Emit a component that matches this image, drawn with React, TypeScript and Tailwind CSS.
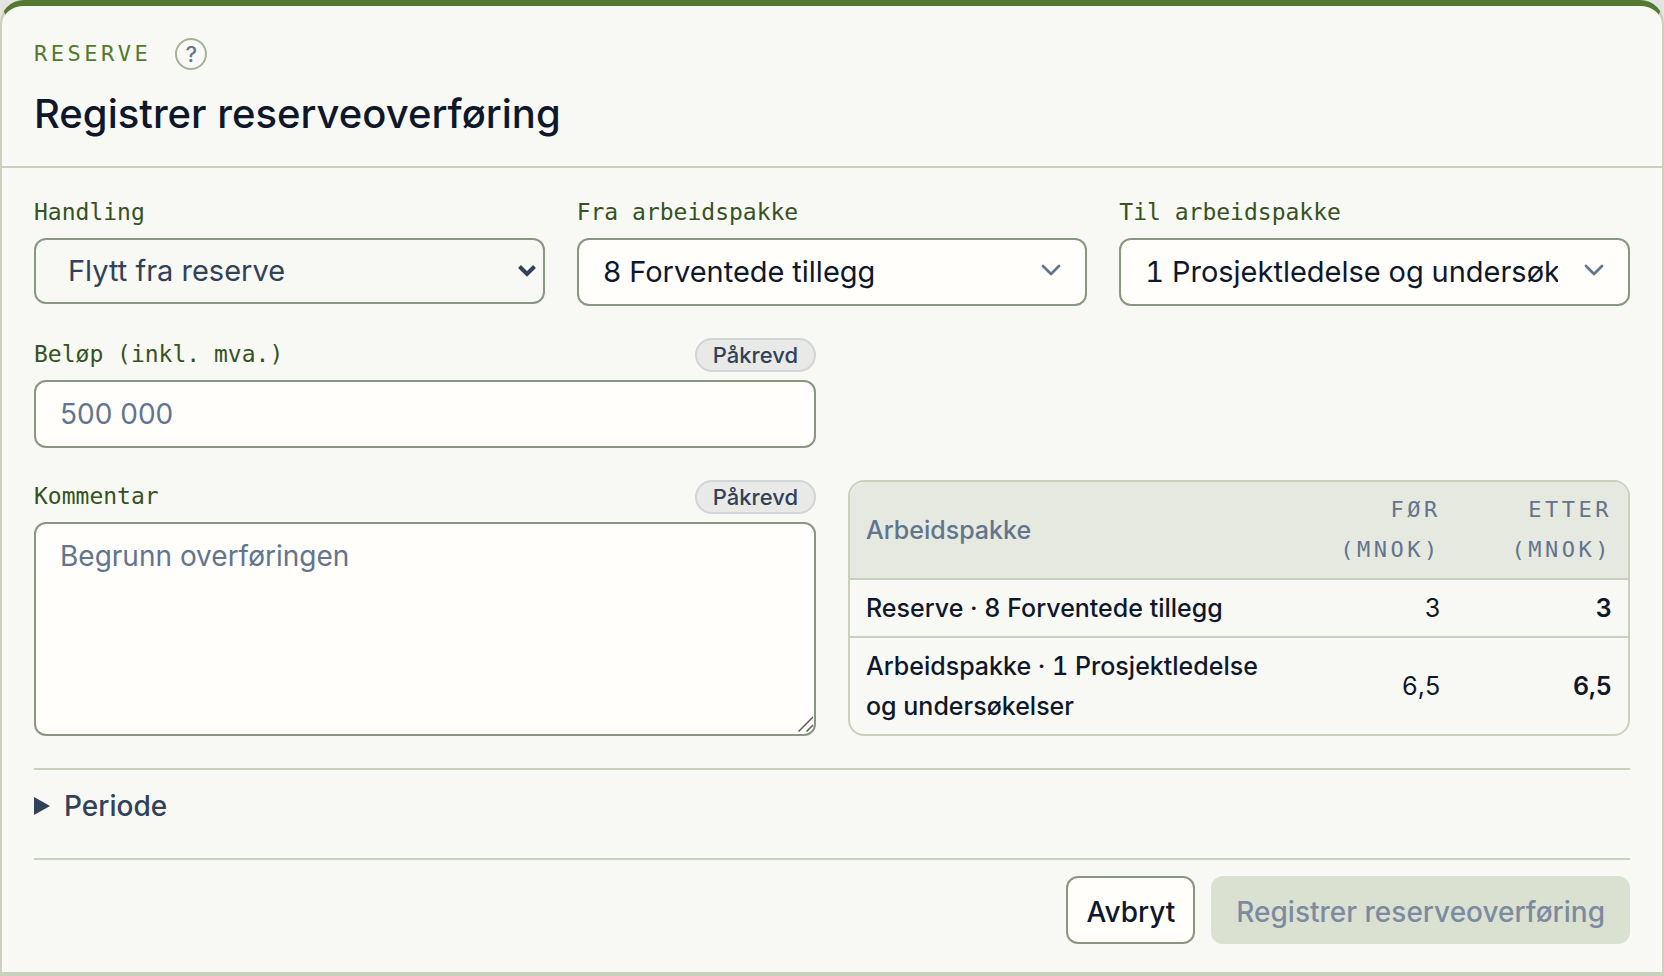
import React from "react";

const fieldBox =
  "w-full rounded-xl border-2 border-[#8a9780] bg-[#fffefb] text-[28px] leading-10 text-slate-900 placeholder:text-slate-500 placeholder:opacity-100";

function FieldLabel({ htmlFor, children }: { htmlFor: string; children: React.ReactNode }) {
  return (
    <label
      htmlFor={htmlFor}
      className="pb-1.5 font-['DejaVu_Sans_Mono',monospace] text-[23px] leading-6 text-[#36521f]"
    >
      {children}
    </label>
  );
}

function RequiredBadge() {
  return (
    <span className="flex h-[34px] items-center rounded-full border-2 border-[#d1d5d8] bg-[#e9eae8] px-4 text-[22px] leading-7 font-medium text-slate-700">
      Påkrevd
    </span>
  );
}

function PackageSelect({ id, label, value }: { id: string; label: string; value: string }) {
  return (
    <div className="flex min-w-0 flex-col gap-2">
      <FieldLabel htmlFor={id}>{label}</FieldLabel>
      <div className="relative">
        <select
          id={id}
          className="h-[68px] w-full appearance-none rounded-xl border-2 border-[#8a9780] bg-[#fffefb] pr-[70px] pl-6 text-[29px] leading-10 text-slate-900 tabular-nums"
        >
          <option>{value}</option>
        </select>
        <svg
          aria-hidden="true"
          viewBox="0 0 24 24"
          className="pointer-events-none absolute top-4 right-5 size-8 fill-none stroke-slate-500 stroke-2"
          strokeLinecap="round"
          strokeLinejoin="round"
        >
          <path d="m6 9 6 6 6-6" />
        </svg>
      </div>
    </div>
  );
}

const rows = [
  { name: "Reserve · 8 Forventede tillegg", before: "3", after: "3" },
  { name: "Arbeidspakke · 1 Prosjektledelse og undersøkelser", before: "6,5", after: "6,5" },
];

const monoHead =
  "w-[22%] px-4 py-2 text-right font-['DejaVu_Sans_Mono',monospace] text-[22px] font-normal tracking-[0.16em] uppercase";

export default function App() {
  return (
    <div className="bg-[#e4e5e0] font-[Inter,sans-serif]">
      <section className="rounded-t-3xl border-x-2 border-t-[6px] border-b-4 border-x-[#cad1bb] border-t-[#52792f] border-b-[#cad1bb] bg-[#f8f9f4]">
        <header className="border-b-2 border-[#cad1bb] px-8 pt-8 pb-6">
          <div className="flex items-center gap-6">
            <p className="font-['DejaVu_Sans_Mono',monospace] text-[22px] leading-8 tracking-[0.16em] text-[#52792f] uppercase">
              Reserve
            </p>
            <button
              type="button"
              aria-label="Hjelp"
              className="flex size-8 items-center justify-center rounded-full border-2 border-[#a5b198] text-[22px] leading-7 font-medium text-slate-500"
            >
              ?
            </button>
          </div>
          <h1 className="mt-4 text-[40px] leading-[56px] font-medium text-slate-900">
            Registrer reserveoverføring
          </h1>
        </header>

        <form className="flex flex-col gap-8 px-8 pt-8 pb-7">
          <div className="grid grid-cols-3 gap-8">
            <div className="flex min-w-0 flex-col gap-2">
              <FieldLabel htmlFor="handling">Handling</FieldLabel>
              <div className="relative">
                <select
                  id="handling"
                  className="h-[66px] w-full appearance-none rounded-xl border-2 border-[#8a9780] bg-transparent pr-12 pl-8 text-[29px] leading-10 text-slate-700"
                >
                  <option>Flytt fra reserve</option>
                </select>
                <svg
                  aria-hidden="true"
                  viewBox="0 0 20 14"
                  className="pointer-events-none absolute top-[26px] right-2 h-3.5 w-5 fill-none stroke-slate-700 stroke-4"
                >
                  <path d="m2.5 2.5 7.5 7.5 7.5-7.5" />
                </svg>
              </div>
            </div>
            <PackageSelect id="fra" label="Fra arbeidspakke" value="8 Forventede tillegg" />
            <PackageSelect id="til" label="Til arbeidspakke" value="1 Prosjektledelse og undersøkelser" />
          </div>

          <div className="grid grid-cols-2 gap-8">
            <div className="flex flex-col gap-2">
              <div className="flex items-end justify-between">
                <FieldLabel htmlFor="belop">Beløp (inkl. mva.)</FieldLabel>
                <RequiredBadge />
              </div>
              <input id="belop" placeholder="500 000" className={`h-[68px] px-6 ${fieldBox}`} />
            </div>
          </div>

          <div className="grid grid-cols-2 gap-8">
            <div className="flex flex-col gap-2">
              <div className="flex items-end justify-between">
                <FieldLabel htmlFor="kommentar">Kommentar</FieldLabel>
                <RequiredBadge />
              </div>
              <div className="relative flex grow">
                <textarea
                  id="kommentar"
                  placeholder="Begrunn overføringen"
                  className={`min-h-[214px] resize-none px-6 py-3 ${fieldBox}`}
                />
                <svg
                  aria-hidden="true"
                  viewBox="0 0 16 16"
                  className="pointer-events-none absolute right-0.5 bottom-1 size-4 fill-none stroke-[#5c5c5a]"
                  strokeWidth="1.5"
                >
                  <path d="M.5 15.5l14.5-14.5M8.5 15.5l6.5-6.5" />
                </svg>
              </div>
            </div>

            <div className="overflow-hidden rounded-2xl border-2 border-[#cad1bb]">
              <table className="w-full table-fixed text-[25px] leading-10 text-slate-900 tabular-nums">
                <thead className="bg-[#e5e9df] text-slate-500">
                  <tr>
                    <th scope="col" className="px-4 py-2 text-left font-medium">
                      Arbeidspakke
                    </th>
                    <th scope="col" className={monoHead}>
                      Før (MNOK)
                    </th>
                    <th scope="col" className={monoHead}>
                      Etter (MNOK)
                    </th>
                  </tr>
                </thead>
                <tbody>
                  {rows.map((row) => (
                    <tr key={row.name} className="border-t-2 border-[#cad1bb]">
                      <th scope="row" className="px-4 py-2 text-left font-medium">
                        {row.name}
                      </th>
                      <td className="px-4 py-2 text-right">{row.before}</td>
                      <td className="px-4 py-2 text-right font-semibold">{row.after}</td>
                    </tr>
                  ))}
                </tbody>
              </table>
            </div>
          </div>

          <div>
            <details className="border-t-2 border-[#cad1bb] pt-4 pb-8">
              <summary className="flex cursor-pointer list-none items-center gap-3.5 text-[28px] leading-10 font-medium text-slate-700">
                <svg aria-hidden="true" viewBox="0 0 16 18" className="h-[18px] w-4 fill-slate-700">
                  <path d="M0 0l16 9-16 9z" />
                </svg>
                Periode
              </summary>
            </details>

            <div className="flex justify-end gap-4 border-t-2 border-[#cad1bb] pt-4">
              <button
                type="button"
                className="h-[68px] rounded-xl border-2 border-[#8a9780] bg-[#fffefb] px-[18px] pt-1 text-[28px] leading-10 font-medium text-slate-900"
              >
                Avbryt
              </button>
              <button
                type="submit"
                disabled
                className="h-[68px] rounded-xl border-2 border-[#dae1d1] bg-[#dae1d1] px-[23px] pt-1 text-[28px] leading-10 font-medium text-[#7d8ba1]"
              >
                Registrer reserveoverføring
              </button>
            </div>
          </div>
        </form>
      </section>
    </div>
  );
}
